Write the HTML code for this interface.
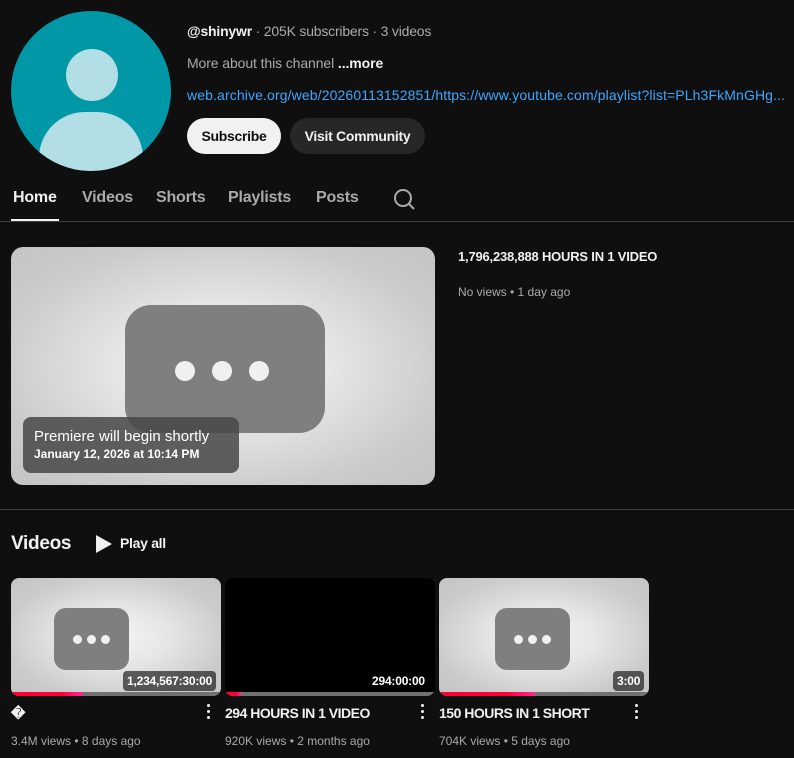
<!DOCTYPE html>
<html><head><meta charset="utf-8"><style>
*{margin:0;padding:0;box-sizing:border-box}
body{width:794px;height:758px;background:#0f0f0f;font-family:"Liberation Sans",sans-serif;color:#f1f1f1;position:relative;overflow:hidden}
.a{position:absolute;white-space:nowrap}
.ph{position:absolute;overflow:hidden;background:radial-gradient(ellipse at 50% 50%,#f4f4f4 0%,#e6e6e6 35%,#cbcbcb 75%,#c4c4c4 100%)}
.in{position:absolute;background:#7f7f7f}
.dot{position:absolute;background:#f0f0f0;border-radius:50%}
.bar{position:absolute;height:4px;background:#717171}
.bar i{position:absolute;left:0;top:0;height:4px;background:linear-gradient(90deg,#ff0033 70%,#ff2791)}
.dur{position:absolute;background:rgba(0,0,0,.6);color:#fff;font-size:12px;font-weight:bold;padding:3px 4px;border-radius:4px;letter-spacing:-.2px}
.kb{position:absolute;width:3px}
.kb b{display:block;width:3px;height:3px;background:#f1f1f1;border-radius:50%;margin-bottom:3px}
.t{font-size:14px;font-weight:bold;letter-spacing:-.5px}
.m{font-size:12px;color:#aaa}
</style></head><body>
<div class="a" style="left:11px;top:11px;width:160px;height:160px;border-radius:50%;background:#0097a7;overflow:hidden">
<div style="position:absolute;left:55px;top:38px;width:52px;height:52px;border-radius:50%;background:#b2dfe5"></div>
<div style="position:absolute;left:28px;top:101px;width:104px;height:80px;border-radius:46px 46px 0 0;background:#b2dfe5"></div>
</div>
<div class="a" style="left:187px;top:23px;font-size:14px;color:#aaa;letter-spacing:-.2px"><b style="color:#f1f1f1">@shinywr</b> · 205K subscribers · 3 videos</div>
<div class="a" style="left:187px;top:55px;font-size:14px;color:#aaa;letter-spacing:-.1px">More about this channel <b style="color:#f1f1f1">...more</b></div>
<div class="a" style="left:187px;top:87px;font-size:14px;color:#3ea6ff;letter-spacing:.12px">web.archive.org/web/20260113152851/https://www.youtube.com/playlist?list=PLh3FkMnGHg...</div>
<div class="a" style="left:187px;top:118px;width:94px;height:36px;border-radius:18px;background:#f1f1f1;color:#0f0f0f;font-size:14px;font-weight:bold;text-align:center;line-height:36px;letter-spacing:-.3px">Subscribe</div>
<div class="a" style="left:290px;top:118px;width:135px;height:36px;border-radius:18px;background:#272727;color:#f1f1f1;font-size:14px;font-weight:bold;text-align:center;line-height:36px;letter-spacing:-.3px">Visit Community</div>
<div class="a" style="left:13px;top:189px;font-size:16px;font-weight:bold;letter-spacing:-.2px">Home</div>
<div class="a" style="left:11px;top:219px;width:48px;height:2px;background:#f1f1f1"></div>
<div class="a" style="left:82px;top:189px;font-size:16px;font-weight:bold;color:#aaa;letter-spacing:-.2px">Videos</div>
<div class="a" style="left:156px;top:189px;font-size:16px;font-weight:bold;color:#aaa;letter-spacing:-.2px">Shorts</div>
<div class="a" style="left:228px;top:189px;font-size:16px;font-weight:bold;color:#aaa;letter-spacing:-.2px">Playlists</div>
<div class="a" style="left:316px;top:189px;font-size:16px;font-weight:bold;color:#aaa;letter-spacing:-.2px">Posts</div>
<svg class="a" style="left:392px;top:187px" width="24" height="24" viewBox="0 0 24 24"><circle cx="11" cy="11" r="8" fill="none" stroke="#aaa" stroke-width="2"/><path d="M17 17l5 5" stroke="#aaa" stroke-width="2"/></svg>
<div class="a" style="left:0;top:221px;width:794px;height:1px;background:#3d3d3d"></div>

<div class="ph" style="left:11px;top:247px;width:424px;height:238px;border-radius:12px">
<div class="in" style="left:114px;top:58px;width:200px;height:128px;border-radius:26px"></div>
<div class="dot" style="left:164px;top:114px;width:20px;height:20px"></div>
<div class="dot" style="left:201px;top:114px;width:20px;height:20px"></div>
<div class="dot" style="left:238px;top:114px;width:20px;height:20px"></div>
<div style="position:absolute;left:12px;top:170px;width:216px;height:56px;border-radius:8px;background:rgba(70,70,70,.85)"></div>
<div class="a" style="left:23px;top:181px;font-size:15px;color:#fff">Premiere will begin shortly</div>
<div class="a" style="left:23px;top:200px;font-size:12px;font-weight:bold;color:#fff">January 12, 2026 at 10:14 PM</div>
</div>
<div class="a t" style="left:458px;top:249px;font-size:13px;letter-spacing:-.2px">1,796,238,888 HOURS IN 1 VIDEO</div>
<div class="a m" style="left:458px;top:285px">No views • 1 day ago</div>
<div class="a" style="left:0;top:509px;width:794px;height:1px;background:#3d3d3d"></div>
<div class="a" style="left:11px;top:533px;font-size:19px;font-weight:bold;letter-spacing:-.3px">Videos</div>
<svg class="a" style="left:94px;top:534px" width="20" height="20" viewBox="0 0 20 20"><path d="M2 1v18l16-9z" fill="#f1f1f1"/></svg>
<div class="a" style="left:120px;top:535px;font-size:14px;font-weight:bold;letter-spacing:-.3px">Play all</div>

<div class="ph" style="left:11px;top:578px;width:210px;height:118px;border-radius:8px">
<div class="in" style="left:43px;top:30px;width:75px;height:62px;border-radius:12px"></div>
<div class="dot" style="left:62px;top:57px;width:9px;height:9px"></div><div class="dot" style="left:76px;top:57px;width:9px;height:9px"></div><div class="dot" style="left:90px;top:57px;width:9px;height:9px"></div>
<div class="dur" style="left:112px;top:93px">1,234,567:30:00</div>
<div class="bar" style="left:0;top:114px;width:210px"><i style="width:72px"></i></div>
</div>
<div class="a" style="left:225px;top:578px;width:210px;height:118px;border-radius:8px;background:#000;overflow:hidden">
<div class="dur" style="left:143px;top:93px;background:none">294:00:00</div>
<div class="bar" style="left:0;top:114px;width:210px"><i style="width:16px"></i></div>
</div>
<div class="ph" style="left:439px;top:578px;width:210px;height:118px;border-radius:8px">
<div class="in" style="left:56px;top:30px;width:75px;height:62px;border-radius:12px"></div>
<div class="dot" style="left:75px;top:57px;width:9px;height:9px"></div><div class="dot" style="left:89px;top:57px;width:9px;height:9px"></div><div class="dot" style="left:103px;top:57px;width:9px;height:9px"></div>
<div class="dur" style="left:174px;top:93px">3:00</div>
<div class="bar" style="left:0;top:114px;width:210px"><i style="width:96px"></i></div>
</div>
<div class="a t" style="left:11px;top:705px">�</div>
<div class="a t" style="left:225px;top:705px">294 HOURS IN 1 VIDEO</div>
<div class="a t" style="left:439px;top:705px">150 HOURS IN 1 SHORT</div>
<div class="kb" style="left:207px;top:704px"><b></b><b></b><b></b></div>
<div class="kb" style="left:421px;top:704px"><b></b><b></b><b></b></div>
<div class="kb" style="left:635px;top:704px"><b></b><b></b><b></b></div>
<div class="a m" style="left:11px;top:734px">3.4M views • 8 days ago</div>
<div class="a m" style="left:225px;top:734px">920K views • 2 months ago</div>
<div class="a m" style="left:439px;top:734px">704K views • 5 days ago</div>
</body></html>
